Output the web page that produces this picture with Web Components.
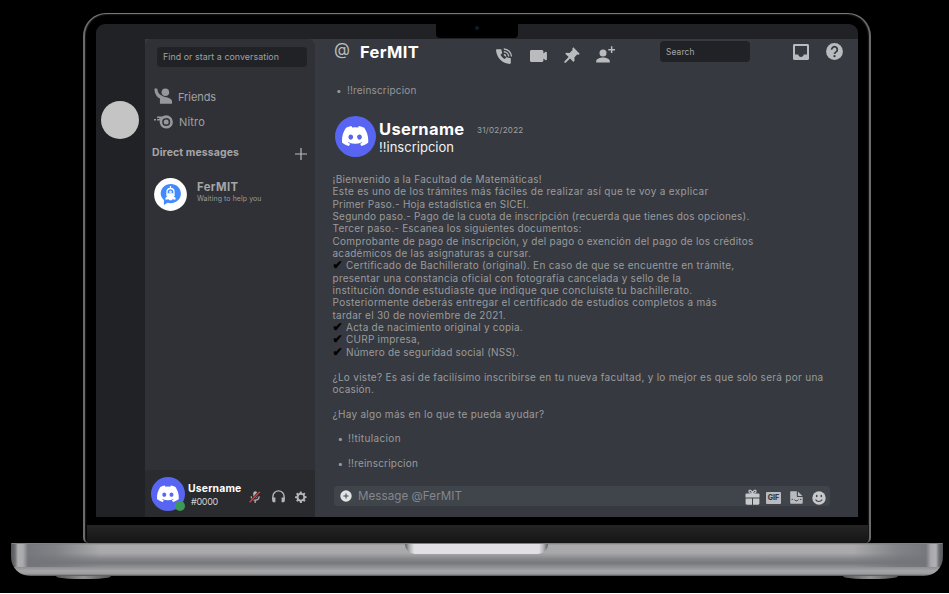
<!DOCTYPE html>
<html lang="es">
<head>
<meta charset="utf-8">
<title>FerMIT</title>
<style>
html{background:#fff}
body{margin:0;width:949px;height:594px;overflow:hidden;font-family:Inter,"Noto Sans",sans-serif;color:#96979a}
</style>
</head>
<body>
<laptop-frame><chat-app></chat-app></laptop-frame>
<script>
const define=(name,html,ready)=>customElements.define(name,class extends HTMLElement{
  constructor(){
    super();
    const t=document.createElement('template');
    t.innerHTML=html;
    this.attachShadow({mode:'open'}).append(t.content.cloneNode(true));
  }
  connectedCallback(){if(ready)ready.call(this)}
});

/* A single line of text tracked to a given width. */
define('fit-text',`<style>:host{display:block;white-space:pre}span{display:inline-block}</style><span><slot></slot></span>`,function(){
  const s=this.shadowRoot.querySelector('span'),w=+this.getAttribute('w');
  if(w){
    s.style.letterSpacing='0px';
    const nat=s.getBoundingClientRect().width,n=[...this.textContent].length;
    s.style.letterSpacing=((w-nat)/n)+'px';
  }
});

const ICONS={
 friends:['0 0 20 18','<path d="M.4 1.5C.3 1 .7.6 1.2.6h1.600c.5 0 .8.4.8.9.2 3 1.900 5.200 4.400 6.500 1 .6 2 .9 3.500 1.400 3.900.5 7.500 1.800 7.500 4.800v2.400H6.200V11.200C2.800 9.500.6 6 .4 1.500z"/><circle cx="12" cy="4.500" r="4"/>'],
 nitro:['0 0 20 16','<path d="M3 2.600h9v1.600H7v2.200H3V5.100h2.300V3.900H3zM0 5.100h2v1.300H0z"/><path fill-rule="evenodd" d="M12.200 1.200a6.700 6.700 0 1 1 0 13.400 6.700 6.700 0 0 1-6.500-8l2-3.600a6.700 6.700 0 0 1 4.500-1.800zm0 2.700a4 4 0 1 0 0 8 4 4 0 0 0 0-8zm0 1.500a2.500 2.500 0 1 1 0 5 2.500 2.500 0 0 1 0-5z"/>'],
 plus:['0 0 12 12','<path d="M5.400 0h1.200v5.400H12v1.200H6.600V12H5.400V6.600H0V5.400h5.400z"/>'],
 phone:['0 0 17 16','<path d="M.8 1.200h4.500l.9 4-1.700 1.600c.9 1.800 2.300 3.200 4.200 4.200l1.700-1.700 4.400.9v4.900c0 .5-.4.8-.9.8C6.500 15.800.4 9.700 0 2.100c0-.5.300-.9.800-.9z"/><path d="M7.800 1a7.900 7.900 0 0 1 7.700 7.500M7.800 3.800a5 5 0 0 1 4.900 4.700M7.800 6.500a2.300 2.300 0 0 1 2 2" fill="none" stroke="currentColor" stroke-width="1.400"/>'],
 video:['0 0 17 12','<path d="M1.500 0h10.300c.9 0 1.600.6 1.600 1.500v1.900l2.200-1.600c.6-.4 1.300 0 1.300.7v7c0 .7-.7 1.100-1.300.7l-2.200-1.600v1.900c0 .9-.7 1.500-1.600 1.500H1.500C.6 12 0 11.400 0 10.500v-9C0 .6.6 0 1.500 0z"/>'],
 pin:['0 0 16 16','<path d="M9.300.3 15.700 6.700 14.800 7.700l-1.700-.1-2.700 2.900.1 3.300-1.100 1.100-3.300-3.400L1.700 15.700.4 15.800.3 14.500 4.600 10.100 1.200 6.800 2.300 5.700l3.300.2 2.900-2.800-.1-1.800z"/>'],
 adduser:['0 0 19 17','<circle cx="7" cy="6.900" r="3.500"/><path d="M.2 16.500v-1.300c0-2.400 4-3.700 6.800-3.700s6.800 1.300 6.800 3.700v1.300zM14.900.3h1.500v2.600H19v1.500h-2.600V7h-1.500V4.400h-2.600V2.900h2.600z"/>'],
 inbox:['0 0 16 16','<path fill-rule="evenodd" d="M1.500 0h13c.9 0 1.500.6 1.500 1.500v13c0 .9-.6 1.500-1.500 1.500h-13C.6 16 0 15.400 0 14.500v-13C0 .6.600 0 1.500 0zM2 2v8.600h3.200c.3 1.500 1.300 2.300 2.800 2.300s2.500-.8 2.800-2.300H14V2z"/>'],
 help:['0 0 18 18','<circle cx="9" cy="9" r="8.900"/><path d="M6 7a3 3 0 1 1 4.700 2.400C9.500 10.200 9 10.700 9 11.700" fill="none" stroke="#36393f" stroke-width="1.900"/><circle cx="9" cy="14" r="1.200" fill="#36393f"/>'],
 mic:['0 0 12 14','<rect x="4.300" y="1.200" width="3.900" height="7" rx="1.950"/><path d="M2.200 6.300c0 5.100 8 5.100 8 0M6.200 10v3" fill="none" stroke="currentColor" stroke-width="1.200"/><path d="M.6 12.300 10.900 1.700" stroke="#292b2f" stroke-width="2.800"/><path d="M.6 12.300 10.900 1.700" stroke="#e0403f" stroke-width="1.250"/>'],
 phones:['0 0 13 13','<path d="M.9 9V6.500a5.600 5.600 0 0 1 11.200 0V9" fill="none" stroke="currentColor" stroke-width="1.400"/><path d="M.2 7.600h3.200v4.600H1.700c-.9 0-1.500-.6-1.500-1.500zM12.800 7.600H9.600v4.600h1.700c.9 0 1.500-.6 1.500-1.500z"/>'],
 gear:['0 0 24 24','<path fill-rule="evenodd" d="m9.800 1-.6 3.100-2 .9-2.700-1.900-2.300 2.700 1.800 2.500-.9 2L0 11v3l3.200.6.9 2-1.900 2.700 2.600 2.400 2.500-1.800 2 .9.700 3h3.500l.6-3.100 2-.9 2.700 1.900 2.400-2.600-1.900-2.500.9-2 2.800-.6v-3.300l-3.100-.6-.9-2 1.900-2.700-2.500-2.400-2.600 1.800-2-.9-.6-3zM11.900 7.600a4.900 4.900 0 1 1 0 9.800 4.900 4.900 0 0 1 0-9.800z"/>'],
 add:['0 0 12 12','<circle cx="6" cy="6" r="5.700"/><path d="M6 3.400v5.200M3.400 6h5.200" stroke="#40444b" stroke-width="1"/>'],
 gift:['0 0 15 16','<path d="M1.500 4.600h12c.6 0 1 .4 1 1v2.900H.5V5.600c0-.6.4-1 1-1zM.6 9.500h6.400v6.200H2c-.8 0-1.400-.5-1.400-1.200zM8 9.500h6.400v5c0 .7-.6 1.200-1.400 1.200H8z"/><path d="M7.500 4.400C5.500 4.400 3.600 3.500 4 1.900c.4-1.600 3.200-.3 3.500 2.500C7.800 1.600 10.600.3 11 1.900c.4 1.600-1.500 2.500-3.500 2.500z" fill="none" stroke="currentColor" stroke-width="1.200"/>'],
 sticker:['0 0 13 13','<path d="M1.200.3h5.600v4.600c0 .8.4 1.200 1.200 1.200h4.700v5.700c0 .6-.4 1-1 1H1.200c-.6 0-1-.4-1-1V1.300c0-.6.400-1 1-1zM7.900.4l4.600 4.600H7.900z"/><path d="M4.300 8.500c.6 1.700 3.700 1.700 4.300 0M1.600 8.400h1.300M10 8.400h1.300" fill="none" stroke="#40444b" stroke-width="1"/>'],
 smile:['0 0 14 14','<circle cx="7" cy="7" r="6.700"/><ellipse cx="4.700" cy="5" rx=".8" ry="1.200" fill="#40444b"/><ellipse cx="9.300" cy="5" rx=".8" ry="1.200" fill="#40444b"/><path d="M3.500 8.500c1.500 2.600 5 2.600 6.700.1" fill="none" stroke="#40444b" stroke-width="1.100"/>']
};
define('ui-icon',`<style>:host{display:block;flex:none}svg{display:block;width:100%;height:100%;fill:currentColor}</style><svg></svg>`,function(){
  const [box,d]=ICONS[this.getAttribute('name')],s=this.shadowRoot.querySelector('svg');
  s.setAttribute('viewBox',box);s.innerHTML=d;
  this.style.width=this.getAttribute('w')+'px';this.style.height=this.getAttribute('h')+'px';
});

define('user-avatar',`<style>
:host{display:flex;flex:none;position:relative;align-items:center;justify-content:center;background:#5865f2;border-radius:50%}
svg{width:64%;height:64%;fill:#fff;display:block}
i{display:none}
:host([online]) i{display:block;position:absolute;right:0;bottom:0;width:10px;height:10px;border-radius:50%;background:#3c9a58}
</style><svg viewBox="0 0 127 97"><path d="M107.700 8.070A105.150 105.150 0 0 0 81.470 0a72.060 72.060 0 0 0-3.360 6.830 97.680 97.680 0 0 0-29.110 0A72.370 72.370 0 0 0 45.640 0a105.890 105.890 0 0 0-26.250 8.090C2.790 32.650-1.710 56.600.54 80.210a105.730 105.730 0 0 0 32.170 16.150 77.700 77.700 0 0 0 6.890-11.110 68.420 68.420 0 0 1-10.850-5.180c.91-.66 1.800-1.340 2.660-2a75.570 75.570 0 0 0 64.320 0c.87.71 1.760 1.390 2.660 2a68.680 68.680 0 0 1-10.870 5.190 77 77 0 0 0 6.890 11.100 105.250 105.250 0 0 0 32.190-16.140c2.640-27.380-4.510-51.110-18.900-72.150zM42.450 65.690C36.180 65.690 31 60 31 53s5-12.740 11.430-12.740S54 46 53.890 53s-5.050 12.690-11.440 12.690zm42.240 0C78.410 65.690 73.250 60 73.250 53s5-12.740 11.440-12.740S96.230 46 96.120 53s-5.040 12.690-11.430 12.690z"/></svg><i></i>`);

define('bot-avatar',`<style>:host{display:block;flex:none;width:33px;height:33px}svg{display:block}</style>
<svg width="33" height="33" viewBox="0 0 33 33"><circle cx="16.500" cy="16.500" r="16.400" fill="#fff"/><path d="M16.800 6c5.700 0 10.100 4.200 10.100 9.600s-4.400 9.600-10.100 9.600c-1.100 0-2.200-.2-3.200-.5L9.900 26.900v-5C7.900 20.400 6.700 18.200 6.700 15.600c0-5.400 4.400-9.600 10.100-9.600z" fill="#448aff"/><path d="M16.500 8v2M13 18v-4.300c0-1.800 1.600-3.200 3.500-3.200s3.500 1.400 3.500 3.200V18" fill="none" stroke="#fff" stroke-width="1.300"/><path d="M13.200 15.200h6.600v3l1.700 1.600v1.900l-3-.5-.7 1h-2.600l-.7-1-3 .5v-1.900l1.700-1.600z" fill="#fff"/><circle cx="16.500" cy="14" r="1.400" fill="#dce8ff"/></svg>`);

define('laptop-frame',`<style>
:host{display:block;width:949px;height:593px;background:#000;overflow:hidden}
.lid{box-sizing:border-box;width:788px;height:530px;margin:13px 0 0 83px;border:2px solid #6b6b6d;border-top:1px solid #777;border-bottom:0;border-radius:23px 23px 5px 5px;padding:10px 11px 0;background:#000;box-shadow:inset 0 0 2px #555;position:relative}
.screen{width:762px;height:493px;border-radius:9px 9px 0 0;overflow:hidden;background:#202225}
.notch{position:absolute;left:351px;top:9px;width:82px;height:15px;border-radius:0 0 4px 4px;background:#000;display:flex;justify-content:center}
.notch i{width:4px;height:4px;border-radius:50%;background:#101c28;margin-top:3px}
.chin{margin:8px -10px 0 -9px;height:18px;background:linear-gradient(#252525,#151515);border-radius:0 0 3px 3px}
.base{position:relative;box-sizing:border-box;width:932px;height:33px;margin-left:11px;border-radius:1px 1px 19px 19px;display:flex;justify-content:center;overflow:hidden;background:
 linear-gradient(90deg,#55565a 0,#6d6e72 4px,#b0b0b3 7px,#aaaaae 12px,#737479ee 17px,#737479bb 45px,#73747900 90px,#73747900 842px,#737479bb 887px,#737479ee 915px,#aaaaae 920px,#b0b0b3 925px,#6d6e72 928px,#55565a 100%) 0 1px/100% 23px no-repeat,
 linear-gradient(#737376 0,#ababad 2px,#a9a9ab 10px,#85868a 16px,#77787c 20px,#88898c 23px,#a6a6a9 28px,#9b9b9e 31px,#505154 33px)}
.grip{width:143px;height:10px;margin:1px 2px 0 0;border-radius:0 0 10px 10px;background:linear-gradient(90deg,#58595c,#aaaaad 4px,#e1e1e5 9px,#e1e1e5 134px,#aaaaad 139px,#58595c)}
.feet{display:flex;justify-content:space-between;width:842px;margin-left:56px}
.feet i{width:55px;height:3px;border-radius:0 0 20px 20px/0 0 3px 3px;background:linear-gradient(90deg,#555,#929294,#555)}
</style><div class="lid"><div class="screen"><slot></slot></div><div class="notch"><i></i></div><div class="chin"></div></div><div class="base"><div class="grip"></div></div><div class="feet"><i></i><i></i></div>`);

define('side-bar',`<style>
:host{display:flex;flex-direction:column;box-sizing:border-box;width:170px;height:478px;background:#2f3136;border-radius:7px 7px 0 0}
.find{box-sizing:border-box;width:150px;height:20px;margin:8px 0 0 12px;background:#202225;border-radius:4px;padding-left:6px;font-size:8.800px;line-height:20px;color:#a0a1a3}
.nav{display:flex;align-items:center;font-size:11px;color:#a0a1a4;padding-left:9px;height:25px}
.nav ui-icon{margin-right:5px;color:#96979c}
.nav:nth-of-type(2){margin-top:17px}
.dm{display:flex;align-items:center;justify-content:space-between;height:20px;margin-top:8px;padding:0 8px 0 7px;color:#a5a5a7;font-size:10.500px;font-weight:700}
.dm ui-icon{color:#bbb;margin-top:3px}
.bot{display:flex;padding:16px 0 0 9px}
.bot div{padding:2px 0 0 10px}
.name{font-size:11.300px;font-weight:700;line-height:14px;color:#a5a5a7}
.sub{font-size:7px;line-height:9px;color:#9a9b9d}
.me{box-sizing:border-box;display:flex;align-items:center;height:47px;margin-top:auto;background:#292b2f;padding-left:6px;color:#b5b6b8}
.who{width:62px;margin:2px 0 0 3px}
.who .n{color:#fff;font-weight:700;font-size:10.400px;line-height:13px}
.who .t{color:#d2d3d4;font-size:9px;line-height:13px;margin-left:3px}
</style>
<div class="find"><fit-text w="116">Find or start a conversation</fit-text></div>
<div class="nav"><ui-icon name="friends" w="19" h="17"></ui-icon><fit-text w="38">Friends</fit-text></div>
<div class="nav"><ui-icon name="nitro" w="20" h="16"></ui-icon><fit-text w="26">Nitro</fit-text></div>
<div class="dm"><fit-text w="87">Direct messages</fit-text><ui-icon name="plus" w="12" h="12"></ui-icon></div>
<div class="bot"><bot-avatar></bot-avatar><div><fit-text class="name" w="41.500">FerMIT</fit-text><fit-text class="sub" w="64.500">Waiting to help you</fit-text></div></div>
<div class="me"><user-avatar online style="width:34px;height:34px"></user-avatar>
<div class="who"><fit-text class="n" w="53.500">Username</fit-text><fit-text class="t" w="27">#0000</fit-text></div>
<ui-icon name="mic" w="12" h="14" style="margin:6px 0 0 -1px"></ui-icon><ui-icon name="phones" w="13" h="13" style="margin:6px 0 0 10.500px"></ui-icon><ui-icon name="gear" w="12" h="12" style="margin:6px 0 0 10px"></ui-icon></div>`);

define('top-bar',`<style>
:host{display:flex;height:38px;padding-left:19px;color:#b9bbbe}
.at{font-size:16.500px;line-height:22px;margin-top:-1px;width:26px}
.title{font-size:16.500px;line-height:22px;font-weight:700;color:#fff;margin-top:2px;width:136px}
.search{width:84px;height:21px;margin:2px 43px 0 0;padding-left:6px;border-radius:4px;background:#202225;font-size:8.400px;line-height:22px;color:#a5a6a8}
</style>
<fit-text class="at" w="17">@</fit-text><fit-text class="title" w="59">FerMIT</fit-text>
<ui-icon name="phone" w="17" h="16" style="margin:9px 0 0"></ui-icon>
<ui-icon name="video" w="17" h="12" style="margin:11px 0 0 17px"></ui-icon>
<ui-icon name="pin" w="16" h="16" style="margin:8px 0 0 17px"></ui-icon>
<ui-icon name="adduser" w="19" h="17" style="margin:7px 0 0 16px"></ui-icon>
<div class="search" style="margin-left:45px"><fit-text w="28.500">Search</fit-text></div>
<ui-icon name="inbox" w="16" h="16" style="margin:5px 0 0"></ui-icon>
<ui-icon name="help" w="17" h="17" style="margin:4px 0 0 17px"></ui-icon>`);

define('bot-reply',`<style>
:host{display:block;font-size:10px;line-height:12.350px;color:#9a9b9d}
fit-text,.row,p{height:12.350px;margin:0}
.row{display:flex}
.row b{flex:none;width:13.500px;color:#000;font:12px/12px "DejaVu Sans",sans-serif;-webkit-text-stroke:.5px #000}
.row u{flex:none;text-decoration:none;width:10.500px;padding-left:5px}
</style><div id="lines"></div>`,function(){
  const lines=[
   ['¡Bienvenido a la Facultad de Matemáticas!',209.500],
   ['Este es uno de los trámites más fáciles de realizar así que te voy a explicar',376],
   ['Primer Paso.- Hoja estadística en SICEI.',196.500],
   ['Segundo paso.- Pago de la cuota de inscripción (recuerda que tienes dos opciones).',417],
   ['Tercer paso.- Escanea los siguientes documentos:',249],
   ['Comprobante de pago de inscripción, y del pago o exención del pago de los créditos',421],
   ['académicos de las asignaturas a cursar.',198.500],
   ['Certificado de Bachillerato (original). En caso de que se encuentre en trámite,',388.500,'✔'],
   ['presentar una constancia oficial con fotografía cancelada y sello de la',348.500],
   ['institución donde estudiaste que indique que concluiste tu bachillerato.',360],
   ['Posteriormente deberás entregar el certificado de estudios completos a más',384.500],
   ['tardar el 30 de noviembre de 2021.',173.500],
   ['Acta de nacimiento original y copia.',177,'✔'],
   ['CURP impresa,',74,'✔'],
   ['Número de seguridad social (NSS).',173,'✔'],
   null,
   ['¿Lo viste? Es así de facilísimo inscribirse en tu nueva facultad, y lo mejor es que solo será por una',491],
   ['ocasión.',41.500],
   null,
   ['¿Hay algo más en lo que te pueda ayudar?',212],
   null,
   ['!!titulacion',53,'•'],
   null,
   ['!!reinscripcion',70,'•']];
  this.shadowRoot.querySelector('#lines').innerHTML=lines.map(l=>{
    if(!l)return '<p></p>';
    const t=`<fit-text w="${l[1]}">${l[0]}</fit-text>`;
    if(!l[2])return t;
    return `<div class="row">${l[2]==='•'?'<u>•</u>':'<b>✔</b>'}${t}</div>`;
  }).join('');
});

define('message-input',`<style>
:host{display:flex;align-items:center;box-sizing:border-box;width:496px;height:20px;margin:0 0 11px 19px;border-radius:4px;background:#40444b;padding:0 4px 0 6px;color:#c8c9cb}
fit-text{font-size:11.600px;line-height:20px;color:#85878b;margin:0 auto 0 6px}
.gif{box-sizing:border-box;width:15px;height:12px;border-radius:1px;background:#b9bbbe;color:#36393f;font-size:7px;font-weight:800;line-height:12px;text-align:center;margin:3px 9px 0 6px}
</style>
<ui-icon name="add" w="12" h="12" style="color:#e2e3e4"></ui-icon><fit-text w="104">Message @FerMIT</fit-text>
<ui-icon name="gift" w="15" h="16" style="margin-top:1px"></ui-icon><div class="gif">GIF</div><ui-icon name="sticker" w="13" h="13" style="margin:3px 9px 0 0;color:#b9bbbe"></ui-icon><ui-icon name="smile" w="14" h="14" style="margin-top:4px"></ui-icon>`);

define('chat-pane',`<style>
:host{display:flex;flex-direction:column;width:543px;height:478px;background:#36393f}
.prev{display:flex;font-size:10px;line-height:13px;margin:7px 0 0 21px;color:#96979a}
.prev u{text-decoration:none;width:11px}
.head{display:flex;margin:19px 0 0 20px}
.txt{margin:3px 0 0 3px;color:#fff}
.top{display:flex;align-items:center;height:20px}
.top .n{font-size:16.500px;font-weight:700;line-height:20px;width:98px}
.top .d{font-size:8px;line-height:20px;color:#a0a1a4;padding-top:2px}
.cmd{font-size:13px;line-height:16px;color:#f1f1f2}
bot-reply{margin:16px 0 0 17.500px}
message-input{margin-top:auto}
</style>
<top-bar></top-bar>
<div class="prev"><u>•</u><fit-text w="69.500">!!reinscripcion</fit-text></div>
<div class="head"><user-avatar style="width:41px;height:41px"></user-avatar><div class="txt"><div class="top"><fit-text class="n" w="85.500">Username</fit-text><fit-text class="d" w="46.500">31/02/2022</fit-text></div><fit-text class="cmd" w="75">!!inscripcion</fit-text></div></div>
<bot-reply></bot-reply>
<message-input></message-input>`);

define('chat-app',`<style>
:host{display:grid;grid-template-columns:49px 170px 543px;padding-top:15px;height:478px;background:#202225}
.rail{padding:62px 0 0 5px}
.rail i{display:block;width:38px;height:38px;border-radius:50%;background:#c4c4c4}
.side{background:#36393f}
</style><div class="rail"><i></i></div><div class="side"><side-bar></side-bar></div><chat-pane></chat-pane>`);
</script>
</body>
</html>
